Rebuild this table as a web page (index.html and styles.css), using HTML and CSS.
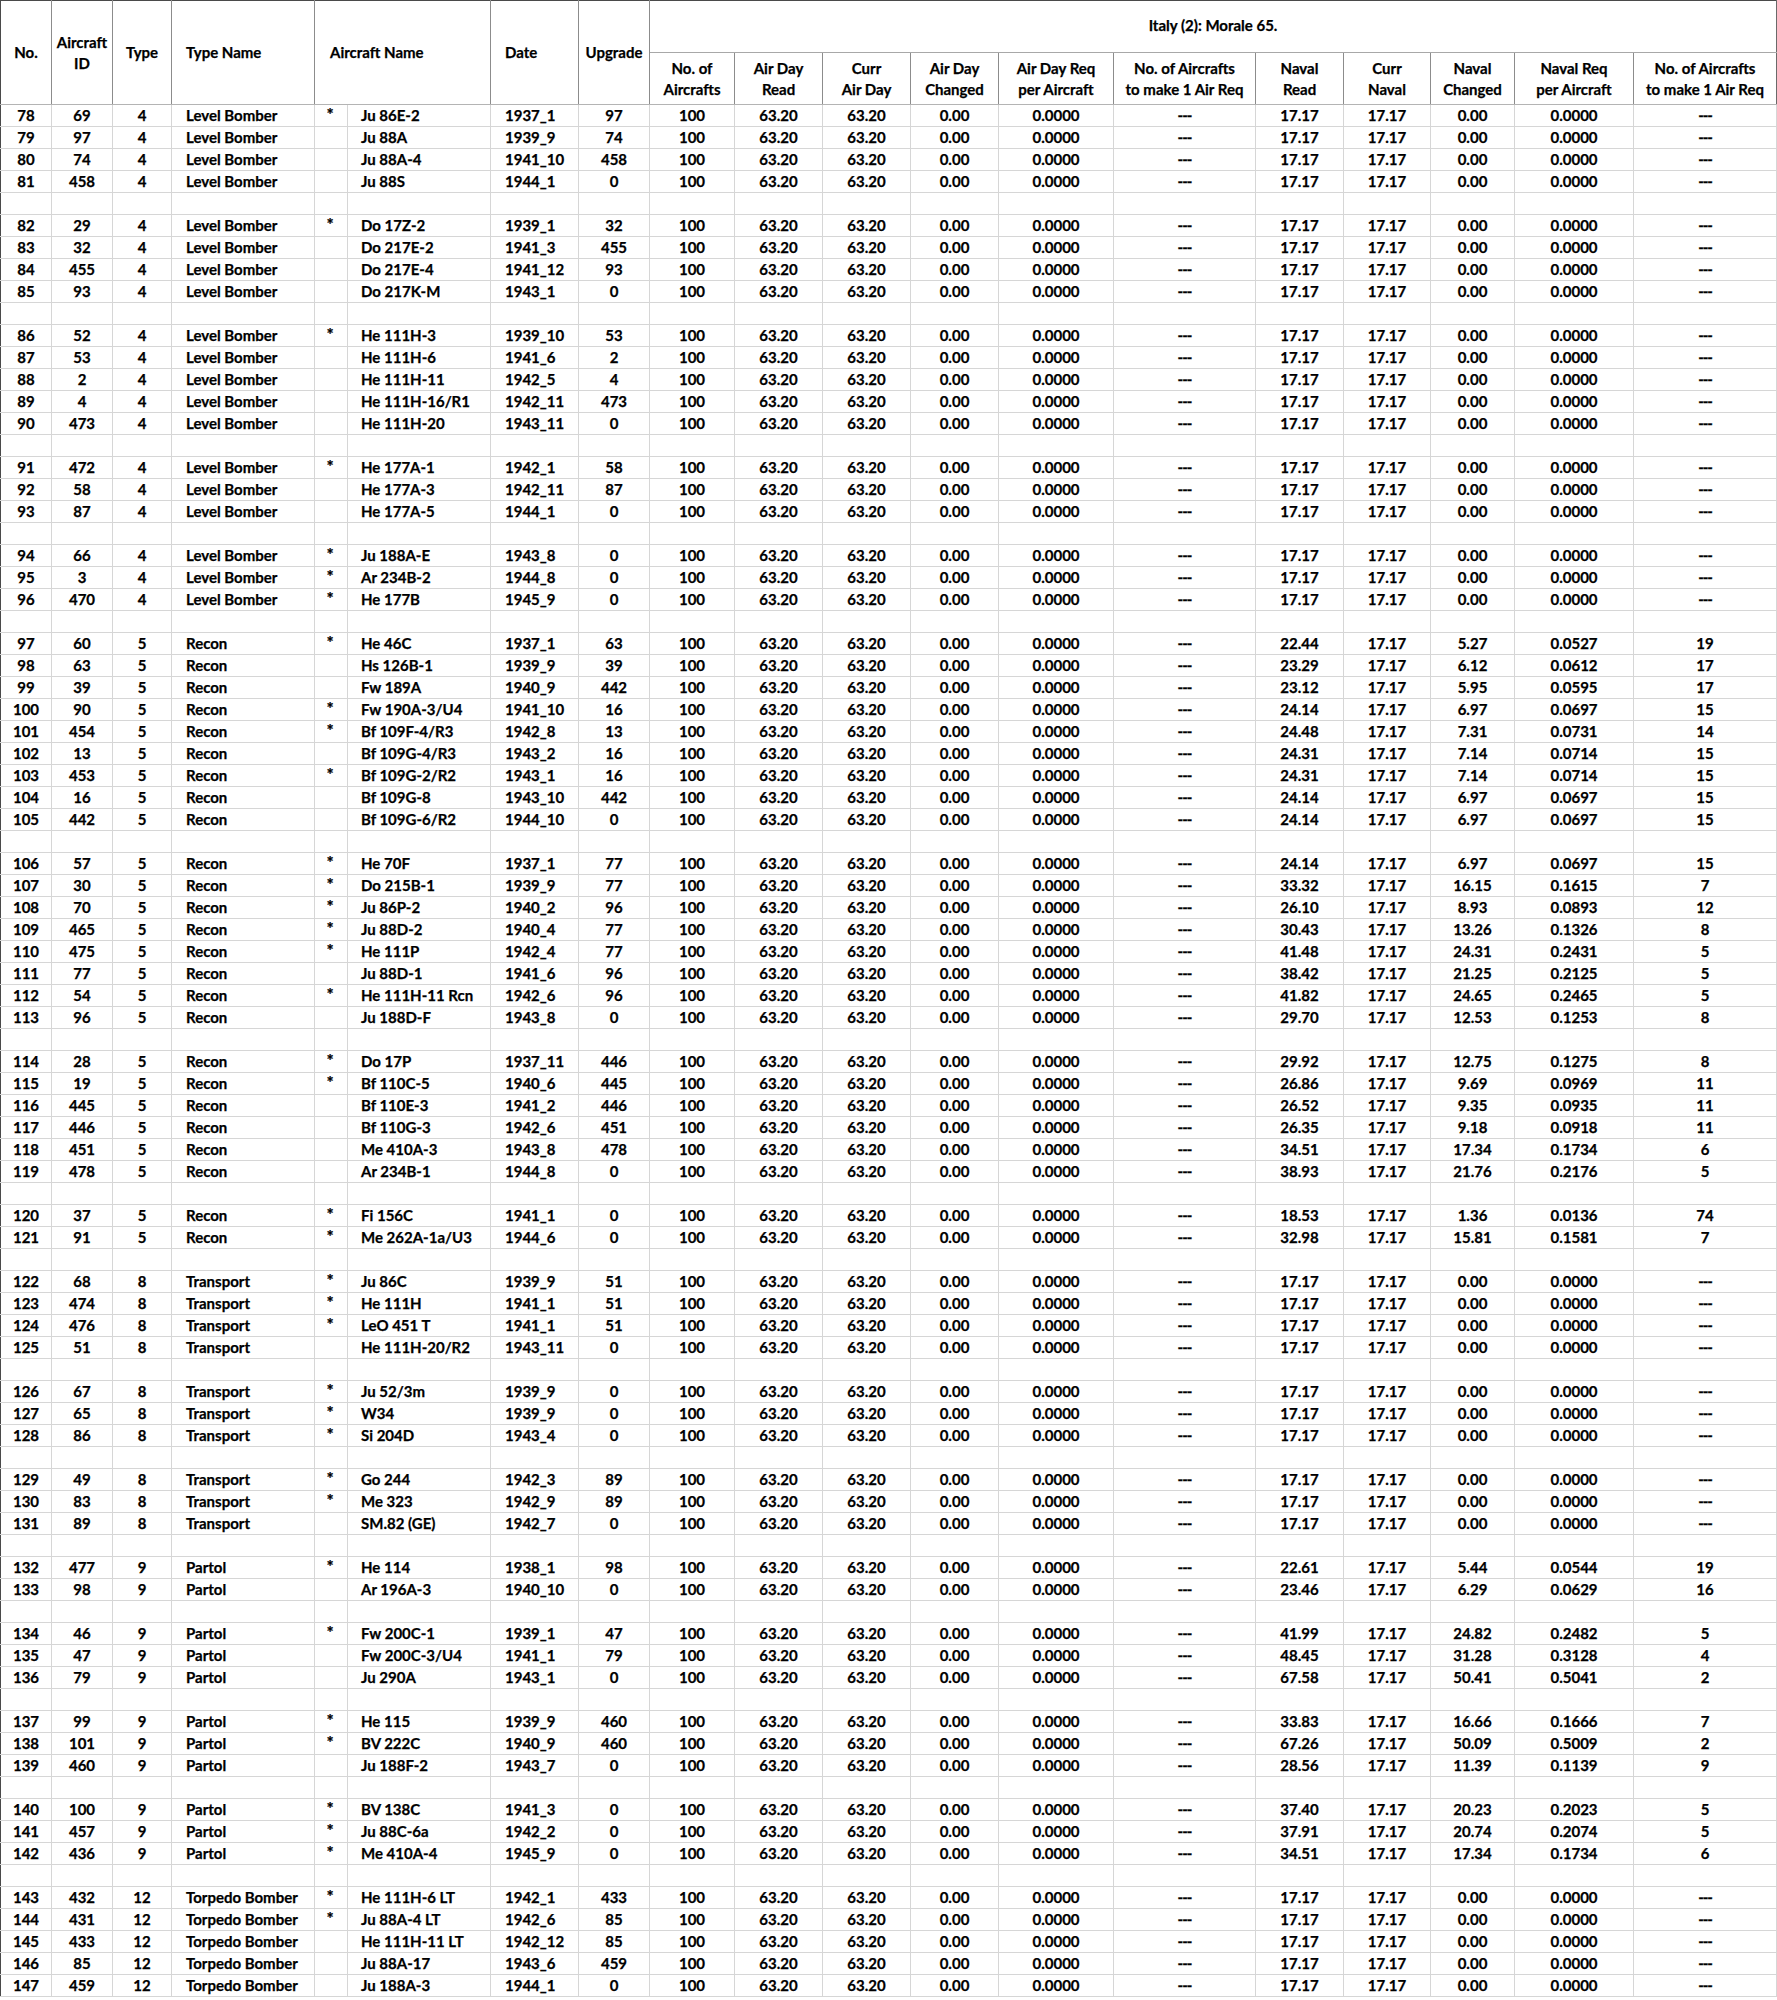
FILE: index.html
```html
<!DOCTYPE html>
<html>
<head>
<meta charset="utf-8">
<title>Italy (2): Morale 65.</title>
<link rel="stylesheet" href="styles.css">
</head>
<body>
<table class="sheet">
<colgroup>
<col class="c-no"><col class="c-id"><col class="c-type"><col class="c-tname"><col class="c-star"><col class="c-name"><col class="c-date"><col class="c-upg">
<col class="c-num"><col class="c-read"><col class="c-curr"><col class="c-chg"><col class="c-req"><col class="c-make">
<col class="c-nread"><col class="c-ncurr"><col class="c-nchg"><col class="c-nreq"><col class="c-nmake">
</colgroup>
<thead>
<tr class="h1">
<th rowspan="2" class="first">No.</th>
<th rowspan="2">Aircraft<br>ID</th>
<th rowspan="2">Type</th>
<th rowspan="2" class="left">Type Name</th>
<th rowspan="2" colspan="2" class="left name-h">Aircraft Name</th>
<th rowspan="2" class="left">Date</th>
<th rowspan="2">Upgrade</th>
<th colspan="11" class="grp">Italy (2): Morale 65.</th>
</tr>
<tr class="h2">
<th>No. of<br>Aircrafts</th>
<th>Air Day<br>Read</th>
<th>Curr<br>Air Day</th>
<th>Air Day<br>Changed</th>
<th>Air Day Req<br>per Aircraft</th>
<th>No. of Aircrafts<br>to make 1 Air Req</th>
<th>Naval<br>Read</th>
<th>Curr<br>Naval</th>
<th>Naval<br>Changed</th>
<th>Naval Req<br>per Aircraft</th>
<th>No. of Aircrafts<br>to make 1 Air Req</th>
</tr>
</thead>
<tbody>
<tr><td>78</td><td>69</td><td>4</td><td>Level Bomber</td><td>*</td><td>Ju 86E-2</td><td>1937_1</td><td>97</td><td>100</td><td>63.20</td><td>63.20</td><td>0.00</td><td>0.0000</td><td class="dash">---</td><td>17.17</td><td>17.17</td><td>0.00</td><td>0.0000</td><td class="dash">---</td></tr>
<tr><td>79</td><td>97</td><td>4</td><td>Level Bomber</td><td></td><td>Ju 88A</td><td>1939_9</td><td>74</td><td>100</td><td>63.20</td><td>63.20</td><td>0.00</td><td>0.0000</td><td class="dash">---</td><td>17.17</td><td>17.17</td><td>0.00</td><td>0.0000</td><td class="dash">---</td></tr>
<tr><td>80</td><td>74</td><td>4</td><td>Level Bomber</td><td></td><td>Ju 88A-4</td><td>1941_10</td><td>458</td><td>100</td><td>63.20</td><td>63.20</td><td>0.00</td><td>0.0000</td><td class="dash">---</td><td>17.17</td><td>17.17</td><td>0.00</td><td>0.0000</td><td class="dash">---</td></tr>
<tr><td>81</td><td>458</td><td>4</td><td>Level Bomber</td><td></td><td>Ju 88S</td><td>1944_1</td><td>0</td><td>100</td><td>63.20</td><td>63.20</td><td>0.00</td><td>0.0000</td><td class="dash">---</td><td>17.17</td><td>17.17</td><td>0.00</td><td>0.0000</td><td class="dash">---</td></tr>
<tr class="gap"><td></td><td></td><td></td><td></td><td></td><td></td><td></td><td></td><td></td><td></td><td></td><td></td><td></td><td></td><td></td><td></td><td></td><td></td><td></td></tr>
<tr><td>82</td><td>29</td><td>4</td><td>Level Bomber</td><td>*</td><td>Do 17Z-2</td><td>1939_1</td><td>32</td><td>100</td><td>63.20</td><td>63.20</td><td>0.00</td><td>0.0000</td><td class="dash">---</td><td>17.17</td><td>17.17</td><td>0.00</td><td>0.0000</td><td class="dash">---</td></tr>
<tr><td>83</td><td>32</td><td>4</td><td>Level Bomber</td><td></td><td>Do 217E-2</td><td>1941_3</td><td>455</td><td>100</td><td>63.20</td><td>63.20</td><td>0.00</td><td>0.0000</td><td class="dash">---</td><td>17.17</td><td>17.17</td><td>0.00</td><td>0.0000</td><td class="dash">---</td></tr>
<tr><td>84</td><td>455</td><td>4</td><td>Level Bomber</td><td></td><td>Do 217E-4</td><td>1941_12</td><td>93</td><td>100</td><td>63.20</td><td>63.20</td><td>0.00</td><td>0.0000</td><td class="dash">---</td><td>17.17</td><td>17.17</td><td>0.00</td><td>0.0000</td><td class="dash">---</td></tr>
<tr><td>85</td><td>93</td><td>4</td><td>Level Bomber</td><td></td><td>Do 217K-M</td><td>1943_1</td><td>0</td><td>100</td><td>63.20</td><td>63.20</td><td>0.00</td><td>0.0000</td><td class="dash">---</td><td>17.17</td><td>17.17</td><td>0.00</td><td>0.0000</td><td class="dash">---</td></tr>
<tr class="gap"><td></td><td></td><td></td><td></td><td></td><td></td><td></td><td></td><td></td><td></td><td></td><td></td><td></td><td></td><td></td><td></td><td></td><td></td><td></td></tr>
<tr><td>86</td><td>52</td><td>4</td><td>Level Bomber</td><td>*</td><td>He 111H-3</td><td>1939_10</td><td>53</td><td>100</td><td>63.20</td><td>63.20</td><td>0.00</td><td>0.0000</td><td class="dash">---</td><td>17.17</td><td>17.17</td><td>0.00</td><td>0.0000</td><td class="dash">---</td></tr>
<tr><td>87</td><td>53</td><td>4</td><td>Level Bomber</td><td></td><td>He 111H-6</td><td>1941_6</td><td>2</td><td>100</td><td>63.20</td><td>63.20</td><td>0.00</td><td>0.0000</td><td class="dash">---</td><td>17.17</td><td>17.17</td><td>0.00</td><td>0.0000</td><td class="dash">---</td></tr>
<tr><td>88</td><td>2</td><td>4</td><td>Level Bomber</td><td></td><td>He 111H-11</td><td>1942_5</td><td>4</td><td>100</td><td>63.20</td><td>63.20</td><td>0.00</td><td>0.0000</td><td class="dash">---</td><td>17.17</td><td>17.17</td><td>0.00</td><td>0.0000</td><td class="dash">---</td></tr>
<tr><td>89</td><td>4</td><td>4</td><td>Level Bomber</td><td></td><td>He 111H-16/R1</td><td>1942_11</td><td>473</td><td>100</td><td>63.20</td><td>63.20</td><td>0.00</td><td>0.0000</td><td class="dash">---</td><td>17.17</td><td>17.17</td><td>0.00</td><td>0.0000</td><td class="dash">---</td></tr>
<tr><td>90</td><td>473</td><td>4</td><td>Level Bomber</td><td></td><td>He 111H-20</td><td>1943_11</td><td>0</td><td>100</td><td>63.20</td><td>63.20</td><td>0.00</td><td>0.0000</td><td class="dash">---</td><td>17.17</td><td>17.17</td><td>0.00</td><td>0.0000</td><td class="dash">---</td></tr>
<tr class="gap"><td></td><td></td><td></td><td></td><td></td><td></td><td></td><td></td><td></td><td></td><td></td><td></td><td></td><td></td><td></td><td></td><td></td><td></td><td></td></tr>
<tr><td>91</td><td>472</td><td>4</td><td>Level Bomber</td><td>*</td><td>He 177A-1</td><td>1942_1</td><td>58</td><td>100</td><td>63.20</td><td>63.20</td><td>0.00</td><td>0.0000</td><td class="dash">---</td><td>17.17</td><td>17.17</td><td>0.00</td><td>0.0000</td><td class="dash">---</td></tr>
<tr><td>92</td><td>58</td><td>4</td><td>Level Bomber</td><td></td><td>He 177A-3</td><td>1942_11</td><td>87</td><td>100</td><td>63.20</td><td>63.20</td><td>0.00</td><td>0.0000</td><td class="dash">---</td><td>17.17</td><td>17.17</td><td>0.00</td><td>0.0000</td><td class="dash">---</td></tr>
<tr><td>93</td><td>87</td><td>4</td><td>Level Bomber</td><td></td><td>He 177A-5</td><td>1944_1</td><td>0</td><td>100</td><td>63.20</td><td>63.20</td><td>0.00</td><td>0.0000</td><td class="dash">---</td><td>17.17</td><td>17.17</td><td>0.00</td><td>0.0000</td><td class="dash">---</td></tr>
<tr class="gap"><td></td><td></td><td></td><td></td><td></td><td></td><td></td><td></td><td></td><td></td><td></td><td></td><td></td><td></td><td></td><td></td><td></td><td></td><td></td></tr>
<tr><td>94</td><td>66</td><td>4</td><td>Level Bomber</td><td>*</td><td>Ju 188A-E</td><td>1943_8</td><td>0</td><td>100</td><td>63.20</td><td>63.20</td><td>0.00</td><td>0.0000</td><td class="dash">---</td><td>17.17</td><td>17.17</td><td>0.00</td><td>0.0000</td><td class="dash">---</td></tr>
<tr><td>95</td><td>3</td><td>4</td><td>Level Bomber</td><td>*</td><td>Ar 234B-2</td><td>1944_8</td><td>0</td><td>100</td><td>63.20</td><td>63.20</td><td>0.00</td><td>0.0000</td><td class="dash">---</td><td>17.17</td><td>17.17</td><td>0.00</td><td>0.0000</td><td class="dash">---</td></tr>
<tr><td>96</td><td>470</td><td>4</td><td>Level Bomber</td><td>*</td><td>He 177B</td><td>1945_9</td><td>0</td><td>100</td><td>63.20</td><td>63.20</td><td>0.00</td><td>0.0000</td><td class="dash">---</td><td>17.17</td><td>17.17</td><td>0.00</td><td>0.0000</td><td class="dash">---</td></tr>
<tr class="gap"><td></td><td></td><td></td><td></td><td></td><td></td><td></td><td></td><td></td><td></td><td></td><td></td><td></td><td></td><td></td><td></td><td></td><td></td><td></td></tr>
<tr><td>97</td><td>60</td><td>5</td><td>Recon</td><td>*</td><td>He 46C</td><td>1937_1</td><td>63</td><td>100</td><td>63.20</td><td>63.20</td><td>0.00</td><td>0.0000</td><td class="dash">---</td><td>22.44</td><td>17.17</td><td>5.27</td><td>0.0527</td><td>19</td></tr>
<tr><td>98</td><td>63</td><td>5</td><td>Recon</td><td></td><td>Hs 126B-1</td><td>1939_9</td><td>39</td><td>100</td><td>63.20</td><td>63.20</td><td>0.00</td><td>0.0000</td><td class="dash">---</td><td>23.29</td><td>17.17</td><td>6.12</td><td>0.0612</td><td>17</td></tr>
<tr><td>99</td><td>39</td><td>5</td><td>Recon</td><td></td><td>Fw 189A</td><td>1940_9</td><td>442</td><td>100</td><td>63.20</td><td>63.20</td><td>0.00</td><td>0.0000</td><td class="dash">---</td><td>23.12</td><td>17.17</td><td>5.95</td><td>0.0595</td><td>17</td></tr>
<tr><td>100</td><td>90</td><td>5</td><td>Recon</td><td>*</td><td>Fw 190A-3/U4</td><td>1941_10</td><td>16</td><td>100</td><td>63.20</td><td>63.20</td><td>0.00</td><td>0.0000</td><td class="dash">---</td><td>24.14</td><td>17.17</td><td>6.97</td><td>0.0697</td><td>15</td></tr>
<tr><td>101</td><td>454</td><td>5</td><td>Recon</td><td>*</td><td>Bf 109F-4/R3</td><td>1942_8</td><td>13</td><td>100</td><td>63.20</td><td>63.20</td><td>0.00</td><td>0.0000</td><td class="dash">---</td><td>24.48</td><td>17.17</td><td>7.31</td><td>0.0731</td><td>14</td></tr>
<tr><td>102</td><td>13</td><td>5</td><td>Recon</td><td></td><td>Bf 109G-4/R3</td><td>1943_2</td><td>16</td><td>100</td><td>63.20</td><td>63.20</td><td>0.00</td><td>0.0000</td><td class="dash">---</td><td>24.31</td><td>17.17</td><td>7.14</td><td>0.0714</td><td>15</td></tr>
<tr><td>103</td><td>453</td><td>5</td><td>Recon</td><td>*</td><td>Bf 109G-2/R2</td><td>1943_1</td><td>16</td><td>100</td><td>63.20</td><td>63.20</td><td>0.00</td><td>0.0000</td><td class="dash">---</td><td>24.31</td><td>17.17</td><td>7.14</td><td>0.0714</td><td>15</td></tr>
<tr><td>104</td><td>16</td><td>5</td><td>Recon</td><td></td><td>Bf 109G-8</td><td>1943_10</td><td>442</td><td>100</td><td>63.20</td><td>63.20</td><td>0.00</td><td>0.0000</td><td class="dash">---</td><td>24.14</td><td>17.17</td><td>6.97</td><td>0.0697</td><td>15</td></tr>
<tr><td>105</td><td>442</td><td>5</td><td>Recon</td><td></td><td>Bf 109G-6/R2</td><td>1944_10</td><td>0</td><td>100</td><td>63.20</td><td>63.20</td><td>0.00</td><td>0.0000</td><td class="dash">---</td><td>24.14</td><td>17.17</td><td>6.97</td><td>0.0697</td><td>15</td></tr>
<tr class="gap"><td></td><td></td><td></td><td></td><td></td><td></td><td></td><td></td><td></td><td></td><td></td><td></td><td></td><td></td><td></td><td></td><td></td><td></td><td></td></tr>
<tr><td>106</td><td>57</td><td>5</td><td>Recon</td><td>*</td><td>He 70F</td><td>1937_1</td><td>77</td><td>100</td><td>63.20</td><td>63.20</td><td>0.00</td><td>0.0000</td><td class="dash">---</td><td>24.14</td><td>17.17</td><td>6.97</td><td>0.0697</td><td>15</td></tr>
<tr><td>107</td><td>30</td><td>5</td><td>Recon</td><td>*</td><td>Do 215B-1</td><td>1939_9</td><td>77</td><td>100</td><td>63.20</td><td>63.20</td><td>0.00</td><td>0.0000</td><td class="dash">---</td><td>33.32</td><td>17.17</td><td>16.15</td><td>0.1615</td><td>7</td></tr>
<tr><td>108</td><td>70</td><td>5</td><td>Recon</td><td>*</td><td>Ju 86P-2</td><td>1940_2</td><td>96</td><td>100</td><td>63.20</td><td>63.20</td><td>0.00</td><td>0.0000</td><td class="dash">---</td><td>26.10</td><td>17.17</td><td>8.93</td><td>0.0893</td><td>12</td></tr>
<tr><td>109</td><td>465</td><td>5</td><td>Recon</td><td>*</td><td>Ju 88D-2</td><td>1940_4</td><td>77</td><td>100</td><td>63.20</td><td>63.20</td><td>0.00</td><td>0.0000</td><td class="dash">---</td><td>30.43</td><td>17.17</td><td>13.26</td><td>0.1326</td><td>8</td></tr>
<tr><td>110</td><td>475</td><td>5</td><td>Recon</td><td>*</td><td>He 111P</td><td>1942_4</td><td>77</td><td>100</td><td>63.20</td><td>63.20</td><td>0.00</td><td>0.0000</td><td class="dash">---</td><td>41.48</td><td>17.17</td><td>24.31</td><td>0.2431</td><td>5</td></tr>
<tr><td>111</td><td>77</td><td>5</td><td>Recon</td><td></td><td>Ju 88D-1</td><td>1941_6</td><td>96</td><td>100</td><td>63.20</td><td>63.20</td><td>0.00</td><td>0.0000</td><td class="dash">---</td><td>38.42</td><td>17.17</td><td>21.25</td><td>0.2125</td><td>5</td></tr>
<tr><td>112</td><td>54</td><td>5</td><td>Recon</td><td>*</td><td>He 111H-11 Rcn</td><td>1942_6</td><td>96</td><td>100</td><td>63.20</td><td>63.20</td><td>0.00</td><td>0.0000</td><td class="dash">---</td><td>41.82</td><td>17.17</td><td>24.65</td><td>0.2465</td><td>5</td></tr>
<tr><td>113</td><td>96</td><td>5</td><td>Recon</td><td></td><td>Ju 188D-F</td><td>1943_8</td><td>0</td><td>100</td><td>63.20</td><td>63.20</td><td>0.00</td><td>0.0000</td><td class="dash">---</td><td>29.70</td><td>17.17</td><td>12.53</td><td>0.1253</td><td>8</td></tr>
<tr class="gap"><td></td><td></td><td></td><td></td><td></td><td></td><td></td><td></td><td></td><td></td><td></td><td></td><td></td><td></td><td></td><td></td><td></td><td></td><td></td></tr>
<tr><td>114</td><td>28</td><td>5</td><td>Recon</td><td>*</td><td>Do 17P</td><td>1937_11</td><td>446</td><td>100</td><td>63.20</td><td>63.20</td><td>0.00</td><td>0.0000</td><td class="dash">---</td><td>29.92</td><td>17.17</td><td>12.75</td><td>0.1275</td><td>8</td></tr>
<tr><td>115</td><td>19</td><td>5</td><td>Recon</td><td>*</td><td>Bf 110C-5</td><td>1940_6</td><td>445</td><td>100</td><td>63.20</td><td>63.20</td><td>0.00</td><td>0.0000</td><td class="dash">---</td><td>26.86</td><td>17.17</td><td>9.69</td><td>0.0969</td><td>11</td></tr>
<tr><td>116</td><td>445</td><td>5</td><td>Recon</td><td></td><td>Bf 110E-3</td><td>1941_2</td><td>446</td><td>100</td><td>63.20</td><td>63.20</td><td>0.00</td><td>0.0000</td><td class="dash">---</td><td>26.52</td><td>17.17</td><td>9.35</td><td>0.0935</td><td>11</td></tr>
<tr><td>117</td><td>446</td><td>5</td><td>Recon</td><td></td><td>Bf 110G-3</td><td>1942_6</td><td>451</td><td>100</td><td>63.20</td><td>63.20</td><td>0.00</td><td>0.0000</td><td class="dash">---</td><td>26.35</td><td>17.17</td><td>9.18</td><td>0.0918</td><td>11</td></tr>
<tr><td>118</td><td>451</td><td>5</td><td>Recon</td><td></td><td>Me 410A-3</td><td>1943_8</td><td>478</td><td>100</td><td>63.20</td><td>63.20</td><td>0.00</td><td>0.0000</td><td class="dash">---</td><td>34.51</td><td>17.17</td><td>17.34</td><td>0.1734</td><td>6</td></tr>
<tr><td>119</td><td>478</td><td>5</td><td>Recon</td><td></td><td>Ar 234B-1</td><td>1944_8</td><td>0</td><td>100</td><td>63.20</td><td>63.20</td><td>0.00</td><td>0.0000</td><td class="dash">---</td><td>38.93</td><td>17.17</td><td>21.76</td><td>0.2176</td><td>5</td></tr>
<tr class="gap"><td></td><td></td><td></td><td></td><td></td><td></td><td></td><td></td><td></td><td></td><td></td><td></td><td></td><td></td><td></td><td></td><td></td><td></td><td></td></tr>
<tr><td>120</td><td>37</td><td>5</td><td>Recon</td><td>*</td><td>Fi 156C</td><td>1941_1</td><td>0</td><td>100</td><td>63.20</td><td>63.20</td><td>0.00</td><td>0.0000</td><td class="dash">---</td><td>18.53</td><td>17.17</td><td>1.36</td><td>0.0136</td><td>74</td></tr>
<tr><td>121</td><td>91</td><td>5</td><td>Recon</td><td>*</td><td>Me 262A-1a/U3</td><td>1944_6</td><td>0</td><td>100</td><td>63.20</td><td>63.20</td><td>0.00</td><td>0.0000</td><td class="dash">---</td><td>32.98</td><td>17.17</td><td>15.81</td><td>0.1581</td><td>7</td></tr>
<tr class="gap"><td></td><td></td><td></td><td></td><td></td><td></td><td></td><td></td><td></td><td></td><td></td><td></td><td></td><td></td><td></td><td></td><td></td><td></td><td></td></tr>
<tr><td>122</td><td>68</td><td>8</td><td>Transport</td><td>*</td><td>Ju 86C</td><td>1939_9</td><td>51</td><td>100</td><td>63.20</td><td>63.20</td><td>0.00</td><td>0.0000</td><td class="dash">---</td><td>17.17</td><td>17.17</td><td>0.00</td><td>0.0000</td><td class="dash">---</td></tr>
<tr><td>123</td><td>474</td><td>8</td><td>Transport</td><td>*</td><td>He 111H</td><td>1941_1</td><td>51</td><td>100</td><td>63.20</td><td>63.20</td><td>0.00</td><td>0.0000</td><td class="dash">---</td><td>17.17</td><td>17.17</td><td>0.00</td><td>0.0000</td><td class="dash">---</td></tr>
<tr><td>124</td><td>476</td><td>8</td><td>Transport</td><td>*</td><td>LeO 451 T</td><td>1941_1</td><td>51</td><td>100</td><td>63.20</td><td>63.20</td><td>0.00</td><td>0.0000</td><td class="dash">---</td><td>17.17</td><td>17.17</td><td>0.00</td><td>0.0000</td><td class="dash">---</td></tr>
<tr><td>125</td><td>51</td><td>8</td><td>Transport</td><td></td><td>He 111H-20/R2</td><td>1943_11</td><td>0</td><td>100</td><td>63.20</td><td>63.20</td><td>0.00</td><td>0.0000</td><td class="dash">---</td><td>17.17</td><td>17.17</td><td>0.00</td><td>0.0000</td><td class="dash">---</td></tr>
<tr class="gap"><td></td><td></td><td></td><td></td><td></td><td></td><td></td><td></td><td></td><td></td><td></td><td></td><td></td><td></td><td></td><td></td><td></td><td></td><td></td></tr>
<tr><td>126</td><td>67</td><td>8</td><td>Transport</td><td>*</td><td>Ju 52/3m</td><td>1939_9</td><td>0</td><td>100</td><td>63.20</td><td>63.20</td><td>0.00</td><td>0.0000</td><td class="dash">---</td><td>17.17</td><td>17.17</td><td>0.00</td><td>0.0000</td><td class="dash">---</td></tr>
<tr><td>127</td><td>65</td><td>8</td><td>Transport</td><td>*</td><td>W34</td><td>1939_9</td><td>0</td><td>100</td><td>63.20</td><td>63.20</td><td>0.00</td><td>0.0000</td><td class="dash">---</td><td>17.17</td><td>17.17</td><td>0.00</td><td>0.0000</td><td class="dash">---</td></tr>
<tr><td>128</td><td>86</td><td>8</td><td>Transport</td><td>*</td><td>Si 204D</td><td>1943_4</td><td>0</td><td>100</td><td>63.20</td><td>63.20</td><td>0.00</td><td>0.0000</td><td class="dash">---</td><td>17.17</td><td>17.17</td><td>0.00</td><td>0.0000</td><td class="dash">---</td></tr>
<tr class="gap"><td></td><td></td><td></td><td></td><td></td><td></td><td></td><td></td><td></td><td></td><td></td><td></td><td></td><td></td><td></td><td></td><td></td><td></td><td></td></tr>
<tr><td>129</td><td>49</td><td>8</td><td>Transport</td><td>*</td><td>Go 244</td><td>1942_3</td><td>89</td><td>100</td><td>63.20</td><td>63.20</td><td>0.00</td><td>0.0000</td><td class="dash">---</td><td>17.17</td><td>17.17</td><td>0.00</td><td>0.0000</td><td class="dash">---</td></tr>
<tr><td>130</td><td>83</td><td>8</td><td>Transport</td><td>*</td><td>Me 323</td><td>1942_9</td><td>89</td><td>100</td><td>63.20</td><td>63.20</td><td>0.00</td><td>0.0000</td><td class="dash">---</td><td>17.17</td><td>17.17</td><td>0.00</td><td>0.0000</td><td class="dash">---</td></tr>
<tr><td>131</td><td>89</td><td>8</td><td>Transport</td><td></td><td>SM.82 (GE)</td><td>1942_7</td><td>0</td><td>100</td><td>63.20</td><td>63.20</td><td>0.00</td><td>0.0000</td><td class="dash">---</td><td>17.17</td><td>17.17</td><td>0.00</td><td>0.0000</td><td class="dash">---</td></tr>
<tr class="gap"><td></td><td></td><td></td><td></td><td></td><td></td><td></td><td></td><td></td><td></td><td></td><td></td><td></td><td></td><td></td><td></td><td></td><td></td><td></td></tr>
<tr><td>132</td><td>477</td><td>9</td><td>Partol</td><td>*</td><td>He 114</td><td>1938_1</td><td>98</td><td>100</td><td>63.20</td><td>63.20</td><td>0.00</td><td>0.0000</td><td class="dash">---</td><td>22.61</td><td>17.17</td><td>5.44</td><td>0.0544</td><td>19</td></tr>
<tr><td>133</td><td>98</td><td>9</td><td>Partol</td><td></td><td>Ar 196A-3</td><td>1940_10</td><td>0</td><td>100</td><td>63.20</td><td>63.20</td><td>0.00</td><td>0.0000</td><td class="dash">---</td><td>23.46</td><td>17.17</td><td>6.29</td><td>0.0629</td><td>16</td></tr>
<tr class="gap"><td></td><td></td><td></td><td></td><td></td><td></td><td></td><td></td><td></td><td></td><td></td><td></td><td></td><td></td><td></td><td></td><td></td><td></td><td></td></tr>
<tr><td>134</td><td>46</td><td>9</td><td>Partol</td><td>*</td><td>Fw 200C-1</td><td>1939_1</td><td>47</td><td>100</td><td>63.20</td><td>63.20</td><td>0.00</td><td>0.0000</td><td class="dash">---</td><td>41.99</td><td>17.17</td><td>24.82</td><td>0.2482</td><td>5</td></tr>
<tr><td>135</td><td>47</td><td>9</td><td>Partol</td><td></td><td>Fw 200C-3/U4</td><td>1941_1</td><td>79</td><td>100</td><td>63.20</td><td>63.20</td><td>0.00</td><td>0.0000</td><td class="dash">---</td><td>48.45</td><td>17.17</td><td>31.28</td><td>0.3128</td><td>4</td></tr>
<tr><td>136</td><td>79</td><td>9</td><td>Partol</td><td></td><td>Ju 290A</td><td>1943_1</td><td>0</td><td>100</td><td>63.20</td><td>63.20</td><td>0.00</td><td>0.0000</td><td class="dash">---</td><td>67.58</td><td>17.17</td><td>50.41</td><td>0.5041</td><td>2</td></tr>
<tr class="gap"><td></td><td></td><td></td><td></td><td></td><td></td><td></td><td></td><td></td><td></td><td></td><td></td><td></td><td></td><td></td><td></td><td></td><td></td><td></td></tr>
<tr><td>137</td><td>99</td><td>9</td><td>Partol</td><td>*</td><td>He 115</td><td>1939_9</td><td>460</td><td>100</td><td>63.20</td><td>63.20</td><td>0.00</td><td>0.0000</td><td class="dash">---</td><td>33.83</td><td>17.17</td><td>16.66</td><td>0.1666</td><td>7</td></tr>
<tr><td>138</td><td>101</td><td>9</td><td>Partol</td><td>*</td><td>BV 222C</td><td>1940_9</td><td>460</td><td>100</td><td>63.20</td><td>63.20</td><td>0.00</td><td>0.0000</td><td class="dash">---</td><td>67.26</td><td>17.17</td><td>50.09</td><td>0.5009</td><td>2</td></tr>
<tr><td>139</td><td>460</td><td>9</td><td>Partol</td><td></td><td>Ju 188F-2</td><td>1943_7</td><td>0</td><td>100</td><td>63.20</td><td>63.20</td><td>0.00</td><td>0.0000</td><td class="dash">---</td><td>28.56</td><td>17.17</td><td>11.39</td><td>0.1139</td><td>9</td></tr>
<tr class="gap"><td></td><td></td><td></td><td></td><td></td><td></td><td></td><td></td><td></td><td></td><td></td><td></td><td></td><td></td><td></td><td></td><td></td><td></td><td></td></tr>
<tr><td>140</td><td>100</td><td>9</td><td>Partol</td><td>*</td><td>BV 138C</td><td>1941_3</td><td>0</td><td>100</td><td>63.20</td><td>63.20</td><td>0.00</td><td>0.0000</td><td class="dash">---</td><td>37.40</td><td>17.17</td><td>20.23</td><td>0.2023</td><td>5</td></tr>
<tr><td>141</td><td>457</td><td>9</td><td>Partol</td><td>*</td><td>Ju 88C-6a</td><td>1942_2</td><td>0</td><td>100</td><td>63.20</td><td>63.20</td><td>0.00</td><td>0.0000</td><td class="dash">---</td><td>37.91</td><td>17.17</td><td>20.74</td><td>0.2074</td><td>5</td></tr>
<tr><td>142</td><td>436</td><td>9</td><td>Partol</td><td>*</td><td>Me 410A-4</td><td>1945_9</td><td>0</td><td>100</td><td>63.20</td><td>63.20</td><td>0.00</td><td>0.0000</td><td class="dash">---</td><td>34.51</td><td>17.17</td><td>17.34</td><td>0.1734</td><td>6</td></tr>
<tr class="gap"><td></td><td></td><td></td><td></td><td></td><td></td><td></td><td></td><td></td><td></td><td></td><td></td><td></td><td></td><td></td><td></td><td></td><td></td><td></td></tr>
<tr><td>143</td><td>432</td><td>12</td><td>Torpedo Bomber</td><td>*</td><td>He 111H-6 LT</td><td>1942_1</td><td>433</td><td>100</td><td>63.20</td><td>63.20</td><td>0.00</td><td>0.0000</td><td class="dash">---</td><td>17.17</td><td>17.17</td><td>0.00</td><td>0.0000</td><td class="dash">---</td></tr>
<tr><td>144</td><td>431</td><td>12</td><td>Torpedo Bomber</td><td>*</td><td>Ju 88A-4 LT</td><td>1942_6</td><td>85</td><td>100</td><td>63.20</td><td>63.20</td><td>0.00</td><td>0.0000</td><td class="dash">---</td><td>17.17</td><td>17.17</td><td>0.00</td><td>0.0000</td><td class="dash">---</td></tr>
<tr><td>145</td><td>433</td><td>12</td><td>Torpedo Bomber</td><td></td><td>He 111H-11 LT</td><td>1942_12</td><td>85</td><td>100</td><td>63.20</td><td>63.20</td><td>0.00</td><td>0.0000</td><td class="dash">---</td><td>17.17</td><td>17.17</td><td>0.00</td><td>0.0000</td><td class="dash">---</td></tr>
<tr><td>146</td><td>85</td><td>12</td><td>Torpedo Bomber</td><td></td><td>Ju 88A-17</td><td>1943_6</td><td>459</td><td>100</td><td>63.20</td><td>63.20</td><td>0.00</td><td>0.0000</td><td class="dash">---</td><td>17.17</td><td>17.17</td><td>0.00</td><td>0.0000</td><td class="dash">---</td></tr>
<tr><td>147</td><td>459</td><td>12</td><td>Torpedo Bomber</td><td></td><td>Ju 188A-3</td><td>1944_1</td><td>0</td><td>100</td><td>63.20</td><td>63.20</td><td>0.00</td><td>0.0000</td><td class="dash">---</td><td>17.17</td><td>17.17</td><td>0.00</td><td>0.0000</td><td class="dash">---</td></tr>
</tbody>
</table>
</body>
</html>
```

FILE: styles.css
```css
html, body {
  margin: 0;
  padding: 0;
  background: #ffffff;
}

body {
  font-family: Lato, "Liberation Sans", "DejaVu Sans", sans-serif;
  font-weight: 700;
  font-size: 15px;
  color: #000000;
  -webkit-text-stroke: 0.25px #000000;
}

.sheet {
  border-collapse: collapse;
  table-layout: fixed;
  width: 1776px;
}

.c-no { width: 51px; }
.c-id { width: 61px; }
.c-type { width: 59px; }
.c-tname { width: 143px; }
.c-star { width: 33px; }
.c-name { width: 143px; }
.c-date { width: 88px; }
.c-upg { width: 71px; }
.c-num { width: 85px; }
.c-read { width: 88px; }
.c-curr { width: 88px; }
.c-chg { width: 88px; }
.c-req { width: 115px; }
.c-make { width: 142px; }
.c-nread { width: 88px; }
.c-ncurr { width: 87px; }
.c-nchg { width: 84px; }
.c-nreq { width: 119px; }
.c-nmake { width: 143px; }

.sheet th {
  font-weight: 700;
  padding: 0;
  line-height: 21px;
  vertical-align: middle;
  text-align: center;
  border: 1px solid #8c8c8c;
  border-bottom-color: #b4b4b4;
}

.sheet thead tr.h1 { height: 52px; }
.sheet thead tr.h2 { height: 52px; }

.sheet thead tr.h1 th { border-top: 1px solid #4a4a4a; }
.sheet th.first { border-left: 1px solid #4a4a4a; }
.sheet th.grp { border-bottom-color: #a8a8a8; border-right-color: #6a6a6a; padding-bottom: 2px; }
.sheet thead tr.h2 th:last-child { border-right-color: #6a6a6a; }

.sheet th.left {
  text-align: left;
  padding-left: 14px;
}

.sheet th.name-h { padding-left: 15px; }

.sheet tbody tr { height: 22px; }

.sheet td {
  padding: 0 0 1px 0;
  height: 20px;
  line-height: 20px;
  text-align: center;
  white-space: nowrap;
  border: 1px solid #d6d6d6;
}

.sheet td:first-child { border-left: 1px solid #4a4a4a; }

.sheet td:nth-child(4),
.sheet td:nth-child(6),
.sheet td:nth-child(7) {
  text-align: left;
  padding-left: 14px;
}

.sheet td:nth-child(6) { padding-left: 13px; }

.sheet td:nth-child(5) {
  font-size: 17px;
  padding-right: 2px;
}

.sheet td.dash { letter-spacing: -1px; }
```
